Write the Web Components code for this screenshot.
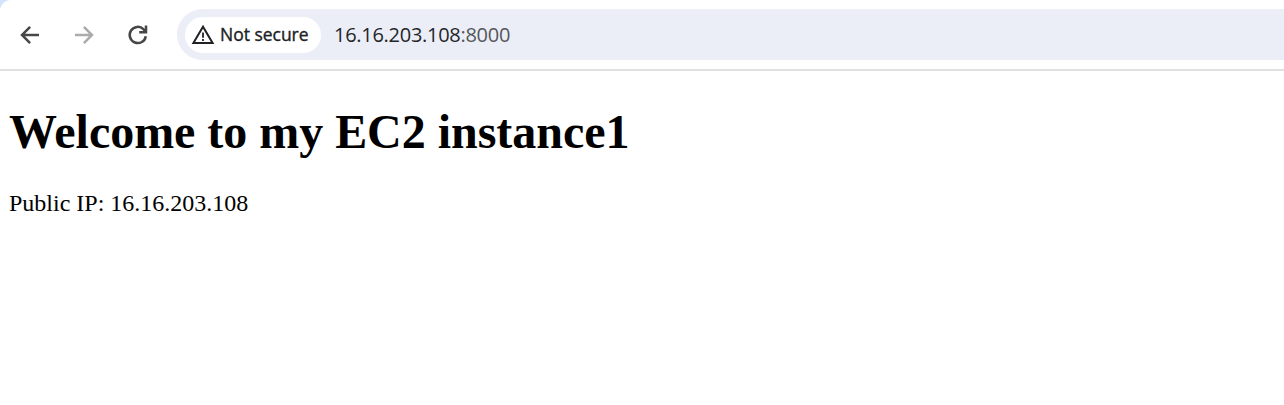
<!DOCTYPE html>
<html lang="en">
<head>
<meta charset="utf-8">
<title>16.16.203.108:8000</title>
<style>
html, body { margin: 0; height: 100%; background: #fff; overflow: hidden; }
</style>
</head>
<body>
<browser-window>
  <browser-toolbar slot="toolbar">
    <nav-icon name="back"></nav-icon>
    <nav-icon name="forward" disabled></nav-icon>
    <nav-icon name="reload"></nav-icon>
    <address-bar slot="address">
      <security-chip slot="chip">Not secure</security-chip>
      <span>16.16.203.108</span><span slot="port">:8000</span>
    </address-bar>
  </browser-toolbar>
  <welcome-page>
    <span slot="title">Welcome to my EC2 instance1</span>
    <span>Public IP: 16.16.203.108</span>
  </welcome-page>
</browser-window>
<script>
function define(name, html, setup) {
  customElements.define(name, class extends HTMLElement {
    constructor() {
      super();
      this.attachShadow({ mode: "open" }).innerHTML = html;
    }
    connectedCallback() { if (setup) setup(this); }
  });
}

define("browser-window", `
<style>
:host { display: flex; flex-direction: column; height: 100vh; background: #fff; }
header { background: #d3e3fd; }
</style>
<header><slot name="toolbar"></slot></header>
<main><slot></slot></main>`);

define("browser-toolbar", `
<style>
:host { display: flex; align-items: center; box-sizing: border-box; height: 71px; padding-left: 12px;
  border-bottom: 2px solid #e0e0e0; border-radius: 11px 0 0 0; background: #fff; }
nav { display: flex; gap: 18px; margin-right: 21px; }
.address { flex: 1; min-width: 0; }
</style>
<nav><slot></slot></nav>
<div class="address"><slot name="address"></slot></div>`);

const icons = {
  back: '<path d="M27 18H10.2M18.1 9.9 10 18l8.1 8.1"/>',
  forward: '<path d="M9 18h16.8M17.9 9.9 26 18l-8.1 8.1"/>',
  reload: '<path d="M25.8 19.2A8.1 8.1 0 1 1 23.6 12.3L26 14.8"/><path d="M26 8.6v6.6h-6.8"/>'
};
define("nav-icon", `
<style>
:host { display: block; width: 36px; height: 36px; color: #474747; }
:host([disabled]) { color: #ababab; }
svg { display: block; fill: none; stroke: currentColor; stroke-width: 2.5; }
</style>
<svg width="36" height="36" viewBox="0 0 36 36"></svg>`,
el => { el.shadowRoot.querySelector("svg").innerHTML = icons[el.getAttribute("name")]; });

define("address-bar", `
<style>
:host { display: flex; align-items: center; box-sizing: border-box; height: 51px; padding-left: 8px;
  border-radius: 25.5px 0 0 25.5px; background: #ebeef7; color: #242528;
  font: 20px/28px "Open Sans", "Noto Sans", sans-serif; }
.url { display: flex; margin-left: 13px; letter-spacing: -.28px; white-space: nowrap; }
.port { color: #55565a; }
</style>
<slot name="chip"></slot>
<div class="url"><slot></slot><span class="port"><slot name="port"></slot></span></div>`);

define("security-chip", `
<style>
:host { display: flex; align-items: center; box-sizing: border-box; width: 136px; height: 36px; padding-left: 6px;
  border-radius: 18px; background: #fff; color: #202124;
  font: 500 17.5px/24px "Open Sans", "Noto Sans", sans-serif; white-space: nowrap; }
svg { flex: none; margin-right: 5px; }
.label { padding-bottom: 2px; letter-spacing: -.02px; -webkit-text-stroke: .35px currentColor; }
</style>
<svg width="24" height="24" viewBox="0 0 24 24" fill="none" stroke="currentColor">
  <path d="M2.4 20 12 3.8 21.6 20Z" stroke-width="2"/>
  <path d="M12 9.5v5.2M12 16v2" stroke-width="1.8"/>
</svg>
<span class="label"><slot></slot></span>`);

define("welcome-page", `
<style>
:host { display: block; padding: 34px 9px 0; color: #000; font: 24px/28px "Liberation Serif", serif; }
h1 { margin: 0; font-size: 48px; line-height: 54px; font-weight: 700; letter-spacing: -.03px; }
p { margin: 30px 0 0; }
</style>
<h1><slot name="title"></slot></h1>
<p><slot></slot></p>`);
</script>
</body>
</html>
